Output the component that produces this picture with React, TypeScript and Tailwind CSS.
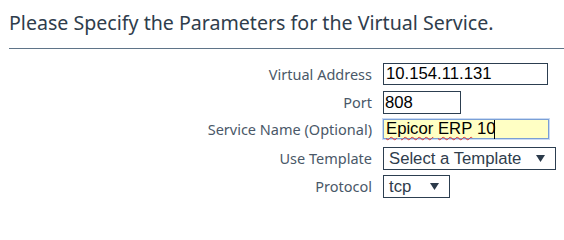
import React from "react";

const labelFont = { fontFamily: '"Noto Sans", "Open Sans", sans-serif' };

const Caret = () => <span className="inline-block w-px h-[19px] bg-black align-middle -ml-px" />;

const Arrow = () => (
  <svg width="9" height="7" viewBox="0 0 9 7" className="shrink-0">
    <path d="M0 0 H9 L4.5 7 Z" fill="#2b3a4a" />
  </svg>
);

const Row = ({ label, className, children }: { label: string; className?: string; children: React.ReactNode }) => (
  <div className={`flex items-center gap-[11px] ${className ?? ""}`}>
    <div className="w-[372px] text-right text-[14.5px] text-[#4a5868] leading-none" style={labelFont}>
      {label}
    </div>
    {children}
  </div>
);

export default function App() {
  return (
    <div className="w-[564px] h-[204px] bg-white overflow-hidden" style={{ fontFamily: '"Liberation Sans", Arial, sans-serif' }}>
      <div className="pl-[9px] pt-[10px]">
        <h1 className="text-[19.6px] leading-[26px] text-[#2f3d4c]" style={labelFont}>
          Please Specify the Parameters for the Virtual Service.
        </h1>
        <div className="mt-[12px] h-px bg-[#5f7488]" />
      </div>

      <div className="flex flex-col mt-[14px]">
        <Row label="Virtual Address">
          <div className="w-[165px] h-[22px] border border-[#2c3e50] flex items-center pl-[2px] text-[16.7px] text-black">
            10.154.11.131
          </div>
        </Row>
        <Row label="Port" className="mt-[6px]">
          <div className="w-[78px] h-[23px] border border-[#2c3e50] flex items-center pl-[1px] text-[16.7px] text-black">
            808
          </div>
        </Row>
        <Row label="Service Name (Optional)" className="mt-[5px]">
          <div className="w-[166px] h-[20px] border border-[#7a9fd6] bg-[#ffffc4] flex items-center pl-[2px] text-[16.7px] text-black shadow-[0_0_0_1px_#c9daf3]">
            <span className="underline decoration-wavy decoration-[#e03030] decoration-1 underline-offset-[2px]">Epicor</span>
            <span>&nbsp;</span>
            <span className="underline decoration-wavy decoration-[#e03030] decoration-1 underline-offset-[2px]">ERP</span>
            <span>&nbsp;10</span>
            <Caret />
          </div>
        </Row>
        <Row label="Use Template" className="mt-[8px]">
          <div className="w-[173px] h-[23px] border border-[#2c3e50] flex items-center justify-between pl-[5px] pr-[10px] text-[16.7px] text-[#2f3d4c]">
            <span>Select a Template</span>
            <Arrow />
          </div>
        </Row>
        <Row label="Protocol" className="mt-[5px]">
          <div className="w-[67px] h-[23px] border border-[#2c3e50] flex items-center justify-between pl-[5px] pr-[10px] text-[16.7px] text-[#2f3d4c]">
            <span>tcp</span>
            <Arrow />
          </div>
        </Row>
      </div>
    </div>
  );
}
